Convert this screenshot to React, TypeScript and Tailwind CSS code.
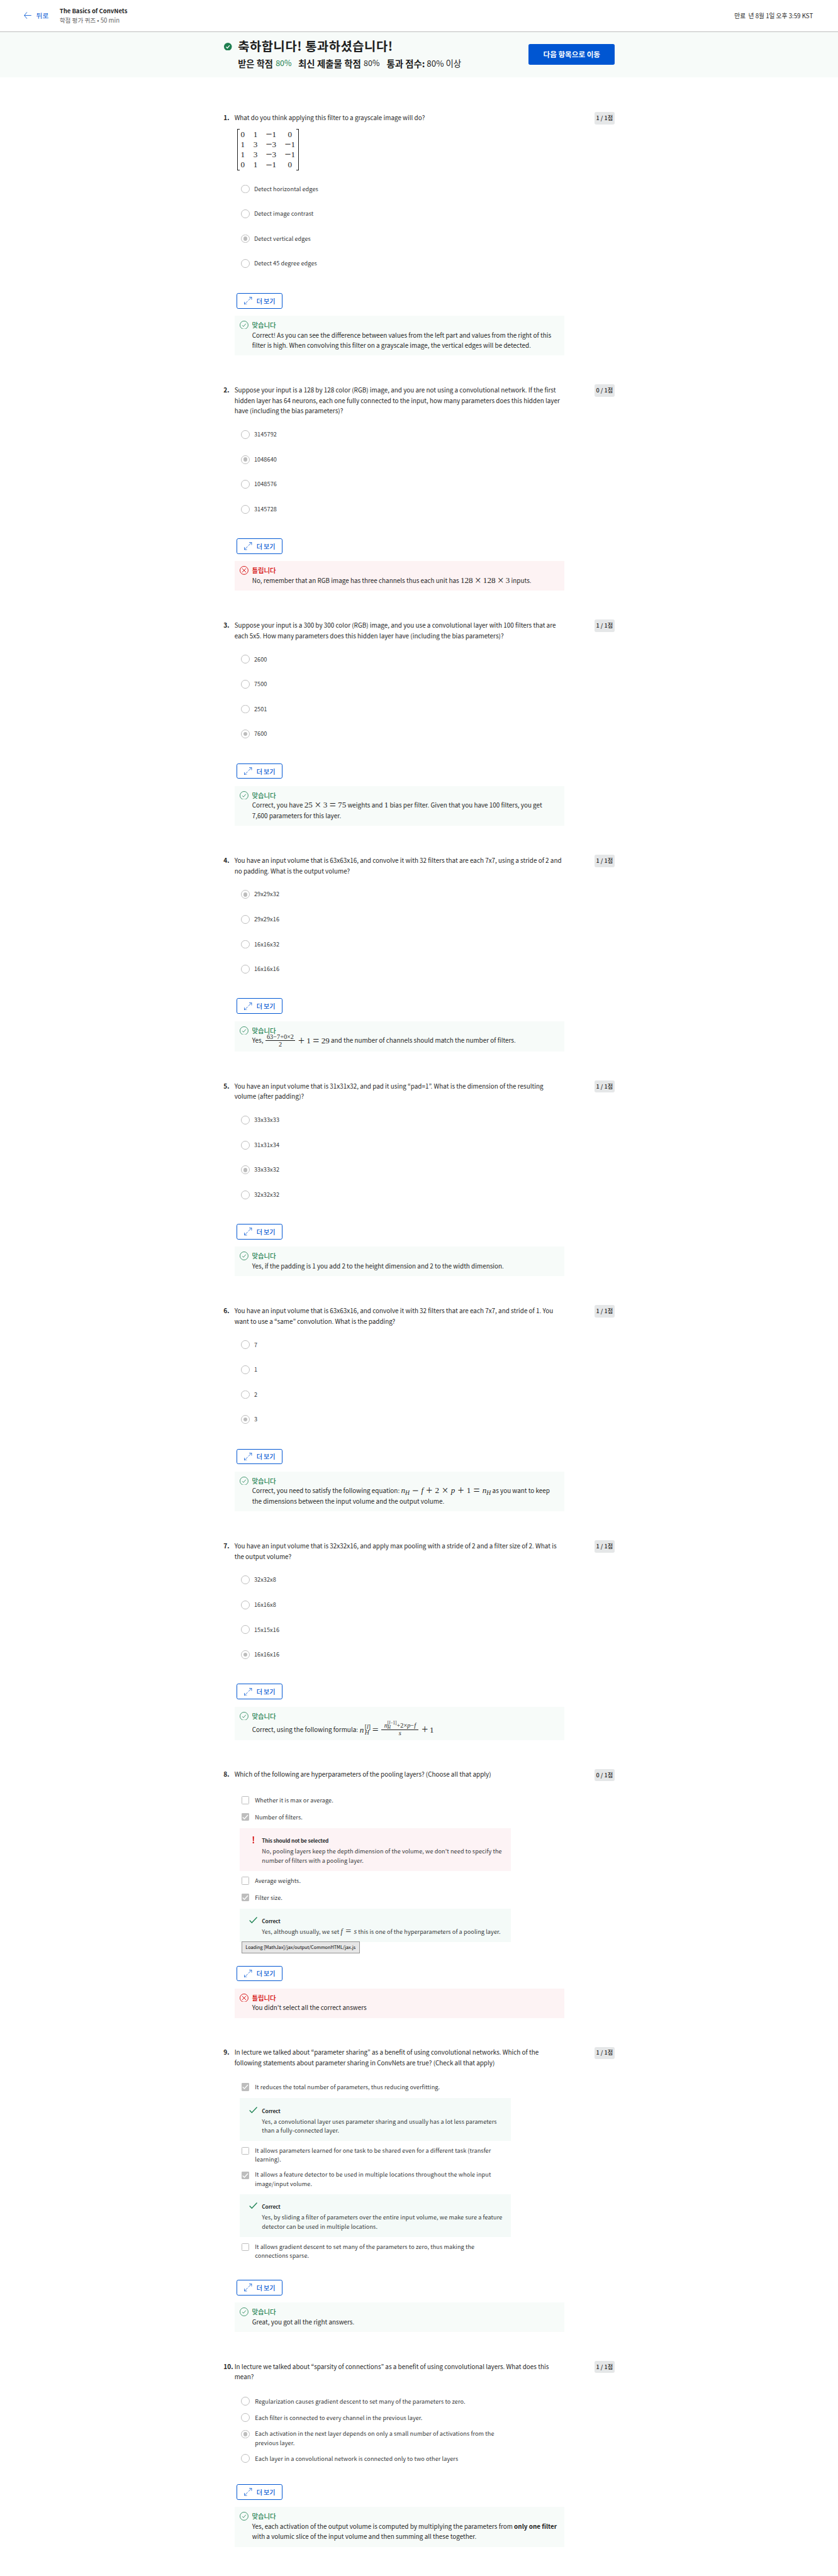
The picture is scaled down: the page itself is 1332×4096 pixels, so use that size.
import type { ReactNode } from "react";

type Verdict = "correct" | "wrong";

/* ---------- icons ---------- */

function ArrowLeft() {
  return (
    <svg className="h-4 w-[17px]" viewBox="0 0 17 16" fill="none" stroke="#0056d2">
      <path d="M7 0.5 1 8l6 7.5" strokeWidth="1.2" />
      <path d="M1 8h16" strokeWidth="1.2" />
    </svg>
  );
}

function PassedIcon() {
  return (
    <svg className="h-[18px] w-[18px]" viewBox="0 0 18 18" fill="none">
      <circle cx="9" cy="9" r="9" fill="#1f7f50" />
      <path d="M5 9.4 7.8 12.2 13 6" stroke="#fff" strokeWidth="1.9" />
    </svg>
  );
}

function ExpandIcon() {
  return (
    <svg className="h-[18px] w-[18px]" viewBox="0 0 18 18" fill="none" stroke="#0056d2" strokeWidth="1.1">
      <path d="M0.8 17.2 8.2 9.8M9.8 8.2 17.2 0.8M11.5 0.8h5.7v5.7M0.8 11.5v5.7h5.7" />
    </svg>
  );
}

function VerdictIcon({ verdict }: { verdict: Verdict }) {
  return verdict === "correct" ? (
    <svg className="h-5 w-5" viewBox="0 0 20 20" fill="none" stroke="#1f8354" strokeWidth="1.2">
      <circle cx="10" cy="10" r="9.3" />
      <path d="M5.8 10.4 8.6 13.2 14.2 6.8" />
    </svg>
  ) : (
    <svg className="h-5 w-5" viewBox="0 0 20 20" fill="none" stroke="#d30001" strokeWidth="1.3">
      <circle cx="10" cy="10" r="9.3" />
      <path d="M5.6 5.6l8.8 8.8M14.4 5.6l-8.8 8.8" />
    </svg>
  );
}

function NoteIcon({ verdict }: { verdict: Verdict }) {
  return verdict === "correct" ? (
    <svg className="h-[15px] w-[19px]" viewBox="0 0 19 15" fill="none" stroke="#1f8354" strokeWidth="2">
      <path d="M1 7.8 6.2 13.2 18 0.8" />
    </svg>
  ) : (
    <svg className="h-4 w-[19px]" viewBox="0 0 19 16" fill="#d30001">
      <path d="M8.2 0h2.8l-.5 11H8.7z" />
      <circle cx="9.6" cy="14.4" r="1.6" />
    </svg>
  );
}

/* ---------- form controls ---------- */

function Radio({ on }: { on?: boolean }) {
  return (
    <span className="flex h-5 w-5 shrink-0 items-center justify-center rounded-full border-2 border-[#bdbdbd] bg-white">
      {on && <span className="h-2.5 w-2.5 rounded-full bg-[#bdbdbd]" />}
    </span>
  );
}

function Checkbox({ on }: { on?: boolean }) {
  return on ? (
    <span className="flex h-[18px] w-[18px] shrink-0 items-center justify-center rounded-xs bg-[#bdbdbd]">
      <svg className="h-3 w-3.5" viewBox="0 0 14 12" fill="none" stroke="#fff" strokeWidth="2">
        <path d="M1 6.5 5 10.3 13 1.5" />
      </svg>
    </span>
  ) : (
    <span className="h-[18px] w-[18px] shrink-0 rounded-xs border-2 border-[#bdbdbd] bg-white" />
  );
}

/* ---------- math ---------- */

const serif = "font-['Liberation_Serif',serif]";

function Op({ children }: { children: ReactNode }) {
  return <span className="relative top-[0.08em] text-[1.35em] leading-[0.6]">{children}</span>;
}

function Formula({ className, parts }: { className: string; parts: ReactNode[] }) {
  return (
    <span className={`inline-flex items-baseline justify-between leading-none ${serif} ${className}`}>
      {parts.map((part, i) =>
        typeof part === "string" && "+−×=".includes(part) ? <Op key={i}>{part}</Op> : <span key={i}>{part}</span>,
      )}
    </span>
  );
}

function Fraction({ top, bottom, className }: { top: ReactNode; bottom: ReactNode; className: string }) {
  return (
    <span className={`inline-flex flex-col items-center text-[14.8px] ${serif} ${className}`}>
      <span className="flex h-4 w-full items-center justify-center leading-none">{top}</span>
      <span className="h-px w-full bg-[#1f1f1f]" />
      <span className="flex h-4 items-center leading-none">{bottom}</span>
    </span>
  );
}

function SubH() {
  return (
    <span className="italic">
      n<span className="relative top-[3px] text-[14px]">H</span>
    </span>
  );
}

function Scripts({ sup, sub, className }: { sup: ReactNode; sub: ReactNode; className: string }) {
  return (
    <span className={`inline-flex flex-col leading-none ${className}`}>
      <span>{sup}</span>
      <span className="italic">{sub}</span>
    </span>
  );
}

const matrixRows = [
  ["0", "1", "−1", "0"],
  ["1", "3", "−3", "−1"],
  ["1", "3", "−3", "−1"],
  ["0", "1", "−1", "0"],
];

function Matrix() {
  return (
    <div className="mt-3.5 ml-1.5 flex h-[94px] w-[142px]">
      <span className="w-1.5 border-y-2 border-l-2 border-[#1f1f1f]" />
      <div
        className={`grid grow grid-cols-[10px_10px_24px_24px] content-center gap-x-[19px] pl-0.5 text-[19px] leading-[23.4px] ${serif}`}
      >
        {matrixRows.flat().map((cell, i) => (
          <span key={i} className="flex items-baseline justify-center">
            {cell.startsWith("−") && <Op>−</Op>}
            {cell.replace("−", "")}
          </span>
        ))}
      </div>
      <span className="w-1.5 border-y-2 border-r-2 border-[#1f1f1f]" />
    </div>
  );
}

/* ---------- question building blocks ---------- */

function Lines({ lines }: { lines: ReactNode[] }) {
  return (
    <>
      {lines.map((line, i) => (
        <span key={i} className="block">
          {line}
        </span>
      ))}
    </>
  );
}

function RadioList({ options, selected }: { options: string[]; selected: number }) {
  return (
    <ul className="mt-[13.5px] ml-[15px]">
      {options.map((option, i) => (
        <li key={option} className="flex h-[57px] items-center gap-2.5 text-[13.2px] tracking-[0.1px] text-[#373a3c]">
          <Radio on={i === selected} />
          {option}
        </li>
      ))}
    </ul>
  );
}

function LongOption({ control, lines }: { control: ReactNode; lines: ReactNode[] }) {
  return (
    <li className="flex py-[7px] text-[13.2px] leading-[21px] tracking-[0.1px] text-[#373a3c]">
      <span className="mr-3 flex h-6 w-5 shrink-0 items-center justify-center">{control}</span>
      <span className="flex min-h-6 flex-col justify-center">
        <Lines lines={lines} />
      </span>
    </li>
  );
}

function Note({
  verdict,
  title,
  lines,
  children,
}: {
  verdict: Verdict;
  title: string;
  lines: ReactNode[];
  children?: ReactNode;
}) {
  return (
    <li
      className={`relative mt-[6.5px] mb-1 -ml-[3px] flex w-[621px] pt-[18px] pb-[13.5px] pl-[22px] text-[13.2px] leading-[21px] tracking-[0.1px] text-[#373a3c] ${
        verdict === "correct" ? "bg-[#f4faf8]" : "bg-[#fdf3f5]"
      }`}
    >
      <span className="mr-2.5 flex h-[18px] items-center">
        <NoteIcon verdict={verdict} />
      </span>
      <div>
        <div className="mb-[3.5px] text-[11.9px] font-bold tracking-[-0.22px] text-[#2a2d2f]">{title}</div>
        <Lines lines={lines} />
      </div>
      {children}
    </li>
  );
}

function Feedback({ verdict, className, children }: { verdict: Verdict; className?: string; children: ReactNode }) {
  const ok = verdict === "correct";
  return (
    <div className={`mt-4 w-[756px] pt-2.5 pl-3 ${ok ? "bg-[#f7fbf9]" : "bg-[#fdf3f4]"} ${className ?? ""}`}>
      <div className={`flex h-[23px] items-center gap-2 ${ok ? "text-[#1f8354]" : "text-[#d30001]"}`}>
        <VerdictIcon verdict={verdict} />
        <span className="text-[15px] font-medium">{ok ? "맞습니다" : "틀립니다"}</span>
      </div>
      <div className="ml-[28.5px] leading-6">{children}</div>
    </div>
  );
}

function MoreButton({ className }: { className: string }) {
  return (
    <button
      className={`ml-[5px] flex h-9 w-[105px] items-center gap-2.5 rounded-[4px] border border-[#0056d2] pl-4 text-[14.4px] font-medium text-[#0056d2] ${className}`}
    >
      <ExpandIcon />
      <span>더 보기</span>
    </button>
  );
}

function Question({
  n,
  score,
  lines,
  children,
}: {
  n: number;
  score: string;
  lines: ReactNode[];
  children: ReactNode;
}) {
  return (
    <section className="mb-[66px] flex">
      <div className="w-[25px] shrink-0 pt-px text-[14.6px] leading-6 font-bold">{n}.</div>
      <div className="w-[824px] pt-px">
        <h2 className="leading-6 font-normal">
          <Lines lines={lines} />
        </h2>
        {children}
      </div>
      <div className="flex h-7 w-[47px] shrink-0 items-center justify-center rounded-[4px] bg-[#e5e7e8] text-[13.2px] font-medium">
        {score}
      </div>
    </section>
  );
}

/* ---------- page ---------- */

export default function App() {
  return (
    <div className="h-[5902px] w-[1919px] overflow-hidden bg-white font-['Noto_Sans_CJK_KR',sans-serif] text-[14.3px] whitespace-nowrap text-[#1f1f1f] [zoom:0.694]">
      <header className="flex h-[73px] items-center border-b border-[#bdbdbd] pr-[57px] pl-[55px]">
        <a className="flex items-center gap-[11px] text-[15.5px] text-[#0056d2]">
          <ArrowLeft />
          뒤로
        </a>
        <div className="ml-[25px]">
          <div className="text-[13.7px] leading-[22px] font-bold">The Basics of ConvNets</div>
          <div className="text-[13.9px] leading-[22px] text-[#666]">학점 평가 퀴즈 • 50 min</div>
        </div>
        <div className="ml-auto text-[14px] whitespace-pre">만료{"  "}년 8월 1일 오후 3:59 KST</div>
      </header>

      <div className="flex h-[104px] bg-[#f7fbf9] pl-[513px]">
        <div className="pt-[25px]">
          <PassedIcon />
        </div>
        <div className="ml-3.5 w-[666px]">
          <h1 className="mt-[14px] text-[28.6px] leading-9 font-bold tracking-[0.8px]">축하합니다! 통과하셨습니다!</h1>
          <div className="mt-[8px] flex text-[18px] leading-7">
            <span className="text-[20.6px] font-bold">받은 학점</span>
            <span className="ml-1.5 text-[#1f8354]">80%</span>
            <span className="ml-[15px] text-[20.9px] font-bold">최신 제출물 학점</span>
            <span className="ml-1.5">80%</span>
            <span className="ml-4 text-[20.8px] font-bold">통과 점수:</span>
            <span className="ml-1 text-[19.3px]">80% 이상</span>
          </div>
        </div>
        <button className="mt-7 flex h-12 w-[197px] items-center justify-center rounded-[4px] bg-[#0056d2] text-[16.7px] font-bold text-white">
          다음 항목으로 이동
        </button>
      </div>

      <main className="pt-20 pl-[512px]">
        <Question n={1} score="1 / 1점" lines={["What do you think applying this filter to a grayscale image will do?"]}>
          <Matrix />
          <div className="h-px" />
          <RadioList
            options={[
              "Detect horizontal edges",
              "Detect image contrast",
              "Detect vertical edges",
              "Detect 45 degree edges",
            ]}
            selected={2}
          />
          <MoreButton className="mt-[38.5px]" />
          <Feedback verdict="correct" className="h-[92px]">
            <Lines
              lines={[
                "Correct! As you can see the difference between values from the left part and values from the right of this",
                "filter is high. When convolving this filter on a grayscale image, the vertical edges will be detected.",
              ]}
            />
          </Feedback>
        </Question>

        <Question
          n={2}
          score="0 / 1점"
          lines={[
            "Suppose your input is a 128 by 128 color (RGB) image, and you are not using a convolutional network. If the first",
            "hidden layer has 64 neurons, each one fully connected to the input, how many parameters does this hidden layer",
            "have (including the bias parameters)?",
          ]}
        >
          <RadioList options={["3145792", "1048640", "1048576", "3145728"]} selected={1} />
          <MoreButton className="mt-[38.5px]" />
          <Feedback verdict="wrong" className="h-[68px]">
            No, remember that an RGB image has three channels thus each unit has{" "}
            <Formula className="w-[113px] text-[19px]" parts={["128", "×", "128", "×", "3"]} /> inputs.
          </Feedback>
        </Question>

        <Question
          n={3}
          score="1 / 1점"
          lines={[
            "Suppose your input is a 300 by 300 color (RGB) image, and you use a convolutional layer with 100 filters that are",
            "each 5x5. How many parameters does this hidden layer have (including the bias parameters)?",
          ]}
        >
          <RadioList options={["2600", "7500", "2501", "7600"]} selected={3} />
          <MoreButton className="mt-[38.5px]" />
          <Feedback verdict="correct" className="h-[92px]">
            <Lines
              lines={[
                <>
                  Correct, you have{" "}
                  <Formula className="w-[96px] text-[19px]" parts={["25", "×", "3", "=", "75"]} /> weights and{" "}
                  <Formula className="text-[19px]" parts={["1"]} /> bias per filter. Given that you have 100 filters, you
                  get
                </>,
                "7,600 parameters for this layer.",
              ]}
            />
          </Feedback>
        </Question>

        <Question
          n={4}
          score="1 / 1점"
          lines={[
            "You have an input volume that is 63x63x16, and convolve it with 32 filters that are each 7x7, using a stride of 2 and",
            "no padding. What is the output volume?",
          ]}
        >
          <RadioList options={["29x29x32", "29x29x16", "16x16x32", "16x16x16"]} selected={0} />
          <MoreButton className="mt-[38.5px]" />
          <Feedback verdict="correct" className="h-[70px]">
            <div className="flex h-6 items-center">
              <span>Yes,</span>
              <Fraction className="ml-[5px] w-[68px]" top="63−7+0×2" bottom="2" />
              <Formula className="ml-[7px] w-[72px] text-[19px]" parts={["+", "1", "=", "29"]} />
              <span className="ml-[3px]">and the number of channels should match the number of filters.</span>
            </div>
          </Feedback>
        </Question>

        <Question
          n={5}
          score="1 / 1점"
          lines={[
            "You have an input volume that is 31x31x32, and pad it using “pad=1”. What is the dimension of the resulting",
            "volume (after padding)?",
          ]}
        >
          <RadioList options={["33x33x33", "31x31x34", "33x33x32", "32x32x32"]} selected={2} />
          <MoreButton className="mt-[38.5px]" />
          <Feedback verdict="correct" className="h-[68px]">
            Yes, if the padding is 1 you add 2 to the height dimension and 2 to the width dimension.
          </Feedback>
        </Question>

        <Question
          n={6}
          score="1 / 1점"
          lines={[
            "You have an input volume that is 63x63x16, and convolve it with 32 filters that are each 7x7, and stride of 1. You",
            "want to use a “same” convolution. What is the padding?",
          ]}
        >
          <RadioList options={["7", "1", "2", "3"]} selected={3} />
          <MoreButton className="mt-[38.5px]" />
          <Feedback verdict="correct" className="h-[92px]">
            <Lines
              lines={[
                <>
                  Correct, you need to satisfy the following equation:{" "}
                  <Formula
                    className="w-[206px] text-[19px]"
                    parts={[<SubH />, "−", <i>f</i>, "+", "2", "×", <i>p</i>, "+", "1", "=", <SubH />]}
                  />{" "}
                  as you want to keep
                </>,
                "the dimensions between the input volume and the output volume.",
              ]}
            />
          </Feedback>
        </Question>

        <Question
          n={7}
          score="1 / 1점"
          lines={[
            "You have an input volume that is 32x32x16, and apply max pooling with a stride of 2 and a filter size of 2. What is",
            "the output volume?",
          ]}
        >
          <RadioList options={["32x32x8", "16x16x8", "15x15x16", "16x16x16"]} selected={3} />
          <MoreButton className="mt-[38.5px]" />
          <Feedback verdict="correct" className="h-[77px]">
            <div className="flex h-10 items-center">
              <span>Correct, using the following formula:</span>
              <span className={`ml-1 flex items-center text-[19px] ${serif}`}>
                <i className="leading-none">n</i>
                <Scripts className="ml-0.5 text-[14px]" sup={<>[<i>l</i>]</>} sub="H" />
              </span>
              <span className={`ml-1 text-[25px] leading-none ${serif}`}>=</span>
              <Fraction
                className="ml-[7px] w-[85px]"
                top={
                  <>
                    <i>n</i>
                    <Scripts className="text-[10.5px]" sup={<>[<i>l</i>−1]</>} sub="H" />
                    <span>
                      +2×<i>p</i>−<i>f</i>
                    </span>
                  </>
                }
                bottom={<i>s</i>}
              />
              <Formula className="ml-[7px] w-7 text-[19px]" parts={["+", "1"]} />
            </div>
          </Feedback>
        </Question>

        <Question
          n={8}
          score="0 / 1점"
          lines={["Which of the following are hyperparameters of the pooling layers? (Choose all that apply)"]}
        >
          <ul className="mt-7 ml-[15px]">
            <LongOption control={<Checkbox />} lines={["Whether it is max or average."]} />
            <LongOption control={<Checkbox on />} lines={["Number of filters."]} />
            <Note
              verdict="wrong"
              title="This should not be selected"
              lines={[
                "No, pooling layers keep the depth dimension of the volume, we don't need to specify the",
                "number of filters with a pooling layer.",
              ]}
            />
            <LongOption control={<Checkbox />} lines={["Average weights."]} />
            <LongOption control={<Checkbox on />} lines={["Filter size."]} />
            <Note
              verdict="correct"
              title="Correct"
              lines={[
                <>
                  Yes, although usually, we set{" "}
                  <Formula className="w-[37px] text-[17px] tracking-normal" parts={[<i>f</i>, "=", <i>s</i>]} /> this is
                  one of the hyperparameters of a pooling layer.
                </>,
              ]}
            >
              <span className="absolute top-[76px] left-1 flex h-[27px] w-[271px] items-center justify-center border border-[#949494] bg-[#e6e6e6] text-[10.5px] tracking-normal text-black">
                Loading [MathJax]/jax/output/CommonHTML/jax.js
              </span>
            </Note>
          </ul>
          <MoreButton className="mt-[54px]" />
          <Feedback verdict="wrong" className="h-[68px]">
            You didn't select all the correct answers
          </Feedback>
        </Question>

        <Question
          n={9}
          score="1 / 1점"
          lines={[
            "In lecture we talked about “parameter sharing” as a benefit of using convolutional networks. Which of the",
            "following statements about parameter sharing in ConvNets are true? (Check all that apply)",
          ]}
        >
          <ul className="mt-6 ml-[15px]">
            <LongOption
              control={<Checkbox on />}
              lines={["It reduces the total number of parameters, thus reducing overfitting."]}
            />
            <Note
              verdict="correct"
              title="Correct"
              lines={[
                "Yes, a convolutional layer uses parameter sharing and usually has a lot less parameters",
                "than a fully-connected layer.",
              ]}
            />
            <LongOption
              control={<Checkbox />}
              lines={["It allows parameters learned for one task to be shared even for a different task (transfer", "learning)."]}
            />
            <LongOption
              control={<Checkbox on />}
              lines={["It allows a feature detector to be used in multiple locations throughout the whole input", "image/input volume."]}
            />
            <Note
              verdict="correct"
              title="Correct"
              lines={[
                "Yes, by sliding a filter of parameters over the entire input volume, we make sure a feature",
                "detector can be used in multiple locations.",
              ]}
            />
            <LongOption
              control={<Checkbox />}
              lines={["It allows gradient descent to set many of the parameters to zero, thus making the", "connections sparse."]}
            />
          </ul>
          <MoreButton className="mt-[38px]" />
          <Feedback verdict="correct" className="h-[68px]">
            Great, you got all the right answers.
          </Feedback>
        </Question>

        <Question
          n={10}
          score="1 / 1점"
          lines={[
            "In lecture we talked about “sparsity of connections” as a benefit of using convolutional layers. What does this",
            "mean?",
          ]}
        >
          <ul className="mt-6 ml-[15px]">
            <LongOption
              control={<Radio />}
              lines={["Regularization causes gradient descent to set many of the parameters to zero."]}
            />
            <LongOption control={<Radio />} lines={["Each filter is connected to every channel in the previous layer."]} />
            <LongOption
              control={<Radio on />}
              lines={["Each activation in the next layer depends on only a small number of activations from the", "previous layer."]}
            />
            <LongOption
              control={<Radio />}
              lines={["Each layer in a convolutional network is connected only to two other layers"]}
            />
          </ul>
          <MoreButton className="mt-[39.5px]" />
          <Feedback verdict="correct" className="h-[92px]">
            <Lines
              lines={[
                <>
                  Yes, each activation of the output volume is computed by multiplying the parameters from{" "}
                  <b>only one filter</b>
                </>,
                "with a volumic slice of the input volume and then summing all these together.",
              ]}
            />
          </Feedback>
        </Question>
      </main>
    </div>
  );
}
